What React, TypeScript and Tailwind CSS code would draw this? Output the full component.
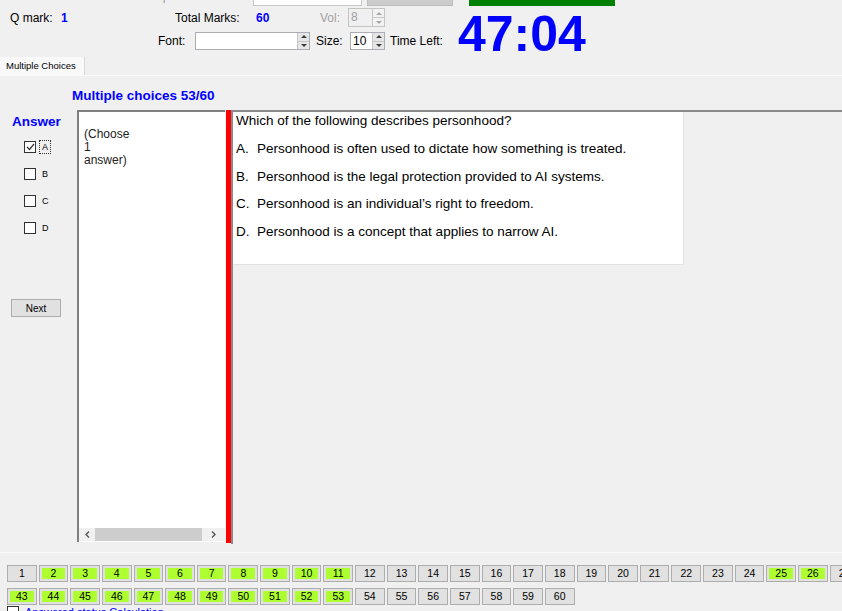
import React from 'react';

const answered = new Set([2, 3, 4, 5, 6, 7, 8, 9, 10, 11, 25, 26, 43, 44, 45, 46, 47, 48, 49, 50, 51, 52, 53]);

const row1 = Array.from({ length: 42 }, (_, i) => i + 1);
const row2 = Array.from({ length: 18 }, (_, i) => i + 43);

const options = [
  { k: 'A.', t: 'Personhood is often used to dictate how something is treated.' },
  { k: 'B.', t: 'Personhood is the legal protection provided to AI systems.' },
  { k: 'C.', t: 'Personhood is an individual\u2019s right to freedom.' },
  { k: 'D.', t: 'Personhood is a concept that applies to narrow AI.' },
];

const SpinArrows = ({ dim }: { dim?: boolean }) => {
  const c = dim ? '#a8a8a8' : '#3c3c3c';
  return (
    <div className="flex w-[12px] shrink-0 flex-col border-l border-[#c6c6c6]">
      <div className={`flex flex-1 items-center justify-center border-b border-[#c6c6c6] ${dim ? 'bg-[#f2f2f2]' : 'bg-[#e6e6e6]'}`}>
        <svg width="6" height="3" viewBox="0 0 6 3">
          <path d="M0 3 L3 0 L6 3Z" fill={c} />
        </svg>
      </div>
      <div className={`flex flex-1 items-center justify-center ${dim ? 'bg-[#f2f2f2]' : 'bg-[#e6e6e6]'}`}>
        <svg width="6" height="3" viewBox="0 0 6 3">
          <path d="M0 0 L3 3 L6 0Z" fill={c} />
        </svg>
      </div>
    </div>
  );
};

const QButton = ({ n }: { n: number }) => {
  const on = answered.has(n);
  return (
    <div className="flex h-[17px] w-[29.65px] shrink-0 border border-[#adadad] bg-[#e1e1e1] p-[2px]">
      <div className={`flex flex-1 items-center justify-center text-[10.5px] leading-none text-black ${on ? 'bg-[#adff2f]' : ''}`}>
        {n}
      </div>
    </div>
  );
};

const Box = ({ checked }: { checked?: boolean }) => (
  <div className="flex h-[12px] w-[12px] shrink-0 items-center justify-center border border-[#333] bg-white">
    {checked && (
      <svg width="9" height="8" viewBox="0 0 9 8">
        <path d="M1 4 L3.5 6.5 L8 1" fill="none" stroke="#333" strokeWidth="1.2" />
      </svg>
    )}
  </div>
);

export default function App() {
  return (
    <div className="h-[611px] w-[842px] overflow-hidden bg-[#f0f0f0] font-['Liberation_Sans',Arial,sans-serif] text-[12px] text-black">
      {/* cut-off strip at the very top */}
      <div className="flex h-[6px] items-start overflow-hidden">
        <span className="-mt-[11px] w-[253px] pl-[4px] leading-[14px] text-[#9a9a9a]">
          Duration: 90 minutes<span className="ml-[40px]">Span Color:</span>
        </span>
        <div className="h-[6px] w-[109px] border border-t-0 border-[#c8c8c8] bg-white" />
        <div className="ml-[5px] h-[6px] w-[86px] border border-t-0 border-[#bdbdbd] bg-[#cccccc]" />
        <div className="ml-[16px] h-[6px] w-[146px] bg-[#008000]" />
      </div>

      {/* header rows */}
      <div className="flex h-[51px]">
        <div className="w-[458px] shrink-0">
          <div className="mt-[2px] flex h-[19px] items-center">
            <span className="w-[61px] pl-[10px]">Q mark:</span>
            <span className="w-[114px] font-bold text-[#0000ff]">1</span>
            <span className="w-[81px]">Total Marks:</span>
            <span className="w-[64px] font-bold text-[#0000ff]">60</span>
            <span className="w-[28px] text-[#a0a0a0]">Vol:</span>
            <div className="flex h-[19px] w-[37px] border border-[#c4c4c4] bg-[#f0f0f0]">
              <span className="flex-1 pl-[2px] leading-[17px] text-[#a0a0a0]">8</span>
              <SpinArrows dim />
            </div>
          </div>
          <div className="mt-[5px] flex h-[18px] items-center">
            <span className="w-[195px] pl-[158px]">Font:</span>
            <div className="flex h-[18px] w-[115px] border border-[#abadb3] bg-white">
              <span className="flex-1" />
              <SpinArrows />
            </div>
            <span className="ml-[6px] w-[34px]">Size:</span>
            <div className="flex h-[18px] w-[35px] border border-[#abadb3] bg-white">
              <span className="flex-1 pl-[2px] leading-[16px]">10</span>
              <SpinArrows />
            </div>
            <span className="ml-[5px]">Time Left:</span>
          </div>
        </div>
        <div className="mt-[3px] text-[50px] font-bold leading-none text-[#0000ff]">47:04</div>
      </div>

      {/* tab strip */}
      <div className="flex h-[18px] items-end">
        <div className="flex h-[18px] w-[85px] items-center border-r border-[#d9d9d9] bg-[#f9f9f9] pl-[6px] text-[9.5px]">
          Multiple Choices
        </div>
      </div>

      {/* tab panel */}
      <div className="h-[478px] border-t border-b border-[#fbfbfb]">
        <div className="mt-[12px] pl-[72px] text-[13.5px] font-bold leading-[16px] text-[#0000ff]">
          Multiple choices 53/60
        </div>
        <div className="mt-[6px] flex h-[434px]">
          {/* answer column */}
          <div className="w-[77px] shrink-0">
            <div className="mt-[4px] pl-[12px] text-[13.5px] font-bold leading-[16px] text-[#0000ff]">Answer</div>
            <div className="mt-[11px] flex flex-col">
              {['A', 'B', 'C', 'D'].map((l, i) => (
                <div key={l} className="flex h-[27px] items-start pl-[24px]">
                  <Box checked={i === 0} />
                  {i === 0 ? (
                    <span className="-mt-[1px] ml-[3px] border border-dotted border-[#333] px-[2px] text-[9px] leading-[12px]">{l}</span>
                  ) : (
                    <span className="ml-[6px] text-[9px] leading-[12px]">{l}</span>
                  )}
                </div>
              ))}
            </div>
            <div className="ml-[11px] mt-[50px] flex h-[18px] w-[50px] items-center justify-center border border-[#adadad] bg-[#e1e1e1] text-[10px]">
              Next
            </div>
          </div>

          {/* instruction box */}
          <div className="flex h-[432px] w-[148px] shrink-0 flex-col border-l-2 border-t-2 border-[#7f7f7f] bg-white">
            <div className="flex-1 pl-[5px] pt-[16px] text-[12px] leading-[13px] text-[#222]">
              (Choose
              <br />1
              <br />
              answer)
            </div>
            <div className="mb-[1px] flex h-[13px] items-center bg-[#f0f0f0]">
              <div className="flex w-[16px] justify-center">
                <svg width="5" height="7" viewBox="0 0 5 7">
                  <path d="M4 0.5 L1 3.5 L4 6.5" fill="none" stroke="#555" strokeWidth="1.4" />
                </svg>
              </div>
              <div className="h-[13px] w-[107px] bg-[#cdcdcd]" />
              <div className="flex flex-1 justify-center">
                <svg width="5" height="7" viewBox="0 0 5 7">
                  <path d="M1 0.5 L4 3.5 L1 6.5" fill="none" stroke="#555" strokeWidth="1.4" />
                </svg>
              </div>
            </div>
          </div>

          {/* red divider */}
          <div className="ml-[1px] h-[433px] w-[5px] shrink-0 bg-[#ff0000]" />

          {/* question area */}
          <div className="flex-1 border-l-2 border-t-2 border-[#8a8a8a] bg-[#f0f0f0]">
            <div className="h-[153px] w-[451px] border-b border-r border-[#e2e2e2] bg-white pl-[3px] pt-[1px] text-[13.5px] leading-[16px]">
              <div>Which of the following describes personhood?</div>
              <div className="mt-[12px] flex flex-col gap-[11.5px]">
                {options.map((o) => (
                  <div key={o.k} className="flex">
                    <span className="w-[21px] shrink-0">{o.k}</span>
                    <span>{o.t}</span>
                  </div>
                ))}
              </div>
            </div>
          </div>
        </div>
      </div>

      {/* question navigator */}
      <div className="mt-[12px] flex gap-[2px] pl-[7px]">
        {row1.map((n) => (
          <QButton key={n} n={n} />
        ))}
      </div>
      <div className="mt-[6px] flex gap-[2px] pl-[7px]">
        {row2.map((n) => (
          <QButton key={n} n={n} />
        ))}
      </div>
      <div className="mt-[1px] flex items-start pl-[7px]">
        <div className="h-[12px] w-[12px] border border-[#333] bg-white" />
        <span className="ml-[6px] text-[11px] leading-[12px] text-[#0000ff]">Answered status Calculation</span>
      </div>
    </div>
  );
}
